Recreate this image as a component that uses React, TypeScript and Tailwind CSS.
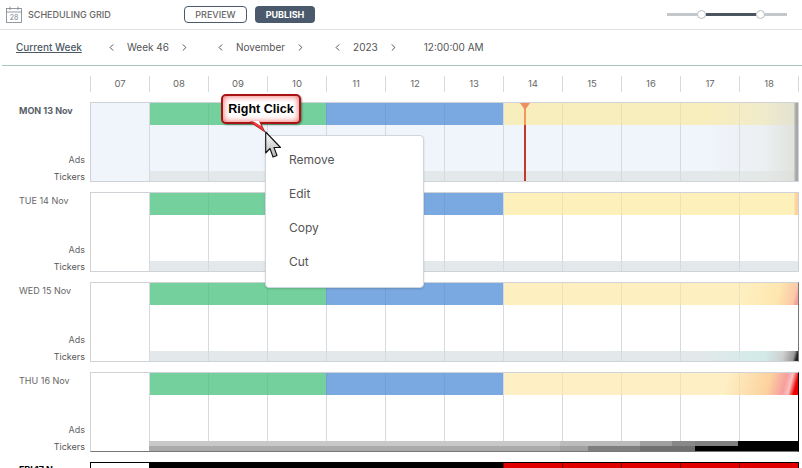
import { ChevronLeft, ChevronRight } from 'lucide-react'

const hours = ['07', '08', '09', '10', '11', '12', '13', '14', '15', '16', '17', '18']

const barColor = (i: number, yellow: string) => {
  if (i === 0) return 'bg-transparent'
  if (i <= 3) return 'bg-[#74d09d]'
  if (i <= 6) return 'bg-[#7aa8e0]'
  return yellow
}

const Pager: React.FC<{ label: string }> = ({ label }) => (
  <div className="flex items-center gap-[10px]">
    <ChevronLeft size={11} strokeWidth={2} className="text-[#444]" />
    <span>{label}</span>
    <ChevronRight size={11} strokeWidth={2} className="text-[#444]" />
  </div>
)

type DayProps = {
  label: string
  bold?: boolean
  today?: boolean
  yellow?: string
  ticker?: string
  tickerLower?: string
  fade?: string
  barFade?: string
  tickerFade?: string
  boxBorder?: string
}

const Day: React.FC<DayProps> = ({ label, bold, today, yellow = 'bg-[#fef0bb]', ticker, tickerLower, fade, barFade, tickerFade, boxBorder = 'border-[#cfd2d6]' }) => (
  <div className="flex h-[80px]">
    <div className="w-[90px] flex flex-col items-end pr-[5px] text-[9px] text-[#666]">
      <div className={`w-full pl-[19px] mt-[2px] whitespace-nowrap ${bold ? 'font-bold text-[#5a5f6a]' : 'text-[#666]'}`}>{label}</div>
      <div className="mt-auto mb-[4px] leading-[12px]">Ads</div>
      <div className="mb-[-2px] leading-[14px] text-[#555]">Tickers</div>
    </div>
    <div className={`relative w-[709px] flex flex-col border ${boxBorder} ${today ? 'bg-[#f0f4fb]' : 'bg-white'}`}>
      <div className="grid grid-cols-[58px_repeat(11,59px)] h-[22px]">
        {hours.map((h, i) => (
          <div key={h} className={`${barColor(i, yellow)} ${i === 1 || i === 7 ? 'border-l border-[#d6d9dd]' : i > 0 ? 'border-l border-black/5' : ''}`} />
        ))}
      </div>
      <div className="grid grid-cols-[58px_repeat(11,59px)] flex-1">
        {hours.map((h, i) => (
          <div key={h} className={i > 0 ? 'border-l border-[#d6d9dd]' : ''} />
        ))}
      </div>
      {ticker ? (
        <div className="ml-[58px] h-[10px] flex flex-col">
          <div className={`h-[5px] ${ticker}`} />
          <div className={`h-[5px] ${tickerLower}`} />
        </div>
      ) : (
        <div className="grid grid-cols-[58px_repeat(11,59px)] h-[10px]">
          {hours.map((h, i) => (
            <div key={h} className={i > 0 ? 'bg-[#e3e8ea] border-l border-[#d6d9dd]' : ''} />
          ))}
        </div>
      )}
      {fade && <div className={`absolute right-0 inset-y-0 w-[110px] ${fade}`} />}
      {barFade && <div className={`absolute right-0 top-0 h-[22px] w-[110px] ${barFade}`} />}
      {tickerFade && <div className={`absolute right-0 bottom-0 h-[10px] w-[110px] ${tickerFade}`} />}
      {today && (
        <div className="absolute left-[433px] top-0 bottom-0 w-[2px] bg-[#c0392b]">
          <div className="h-[22px] bg-[#f0995c]" />
          <svg width="10" height="7" viewBox="0 0 10 7" className="absolute left-[-4px] top-0">
            <path d="M0 0 H10 L5 7 Z" fill="#ee8f5f" />
          </svg>
        </div>
      )}
    </div>
  </div>
)

const App: React.FC = () => {
  return <div className="relative w-[802px] h-[468px] overflow-hidden bg-white font-['Inter',sans-serif] text-[#555]">
    {/* top bar */}
    <div className="h-[30px] flex items-center border-b border-[#dfe3e6] relative">
      <svg width="18" height="17" viewBox="0 0 18 17" className="ml-[5px] text-[#7a828a]" fill="none" stroke="currentColor" strokeWidth="0.8">
        <rect x="1.5" y="2.5" width="15" height="14" />
        <path d="M1.5 6 H16.5 M5 0.5 V4 M13 0.5 V4" />
        <text x="9" y="14" fontSize="7" textAnchor="middle" stroke="none" fill="currentColor">28</text>
      </svg>
      <span className="ml-[5px] w-[156px] text-[9px] font-medium text-[#666] whitespace-nowrap">SCHEDULING GRID</span>
      <button className="w-[63px] h-[17px] rounded-[4px] border border-[#4a5a6c] text-[9px] font-medium text-[#666]">PREVIEW</button>
      <button className="ml-[8px] w-[60px] h-[17px] rounded-[4px] bg-[#4a5a6c] text-[9px] font-bold text-white">PUBLISH</button>
      <div className="ml-auto mr-[15px] w-[120px] h-[3px] bg-[#c3c8cc] flex items-center pl-[30px]">
        <span className="w-[9px] h-[9px] rounded-full bg-white border border-[#b8bec3] shrink-0" />
        <span className="w-[50px] h-[3px] bg-[#4a5560]" />
        <span className="w-[9px] h-[9px] rounded-full bg-white border border-[#b8bec3] shrink-0" />
      </div>
    </div>
    {/* week nav */}
    <div className="h-[36px] flex items-center border-b border-[#a9c4be] ml-[2px] text-[10px] text-[#555]">
      <span className="ml-[14px] w-[90px] font-medium underline text-[#4d5a66]">Current Week</span>
      <Pager label="Week 46" />
      <div className="w-[25px]" />
      <Pager label="November" />
      <div className="w-[26px]" />
      <Pager label="2023" />
      <span className="ml-[25px]">12:00:00 AM</span>
    </div>
    {/* hours */}
    <div className="ml-[90px] mt-[10px] h-[16px] grid grid-cols-[repeat(12,59px)] w-[709px] border-r border-[#d6d9dd] text-[9.5px] text-[#666]">
      {hours.map(h => (
        <div key={h} className="border-l border-[#d6d9dd] flex items-center justify-center">{h}</div>
      ))}
    </div>
    {/* days */}
    <div className="mt-[10px] flex flex-col gap-[10px]">
      <Day
        label="MON 13 Nov"
        bold
        today
        yellow="bg-[#f8edbd]"
        fade="bg-[linear-gradient(to_right,transparent_20%,rgba(228,232,225,0.4)_70%,rgba(222,222,215,0.8)_96%,rgba(160,160,160,0.9)_98%)]"
      />
      <Day
        label="TUE 14 Nov"
        barFade="bg-[linear-gradient(to_right,transparent_96%,rgba(250,190,140,0.6)_98%)]"
      />
      <Day
        label="WED 15 Nov"
        boxBorder="border-[#cfd2d6] border-r-[#777]"
        yellow="bg-[#feefc0]"
        barFade="bg-[linear-gradient(105deg,transparent_50%,rgba(254,225,165,0.6)_80%,rgba(250,190,160,0.8)_95%,rgba(245,150,150,0.9)_98%)]"
        tickerFade="bg-[linear-gradient(105deg,transparent_10%,rgba(205,235,232,0.8)_70%,rgba(205,205,205,0.9)_85%,#999_95%,#222_98%)]"
      />
      <Day
        label="THU 16 Nov"
        boxBorder="border-[#cfd2d6] border-r-black border-b-[#777]"
        yellow="bg-[#feefc4]"
        ticker="bg-[linear-gradient(to_right,#c8c8c8_411px,#bbb_411px,#bbb_491px,#a0a0a0_491px,#a0a0a0_523px,#888_523px,#888_546px,#808080_546px,#808080_589px,#000_589px)]"
        tickerLower="bg-[linear-gradient(to_right,#aaa_411px,#a0a0a0_411px,#a0a0a0_439px,#7f7f7f_439px,#7f7f7f_491px,#707070_491px,#707070_546px,#000_546px)]"
        barFade="bg-[linear-gradient(105deg,transparent_35%,rgba(252,200,145,0.75)_72%,rgba(245,150,155,0.9)_86%,rgba(250,190,190,0.9)_91%,#e00_96%)]"
      />
      <div className="flex h-[80px]">
        <div className="w-[90px] pl-[19px] text-[9px] font-bold text-black mt-[1px]">FRI 17 Nov</div>
        <div className="w-[709px] flex flex-col border border-black bg-white">
          <div className="grid grid-cols-[58px_repeat(11,59px)] h-[22px]">
            {hours.map((h, i) => (
              <div key={h} className={i === 0 ? '' : i <= 6 ? 'bg-black' : 'bg-[#e00000] border-l border-[#7a0000]'} />
            ))}
          </div>
        </div>
      </div>
    </div>
    {/* context menu */}
    <div className="absolute left-[265px] top-[135px] w-[159px] h-[153px] rounded-[4px] border border-[#cfd6dc] bg-white shadow-[0_1px_2px_rgba(0,0,0,0.15)] flex flex-col pt-[7px] pl-[23px] text-[12px] text-[#555]">
      {['Remove', 'Edit', 'Copy', 'Cut'].map(item => (
        <div key={item} className="h-[34px] flex items-center">{item}</div>
      ))}
    </div>
    {/* callout */}
    <div className="absolute left-[221px] top-[94px] w-[80px] h-[30px] rounded-[5px] border-2 border-[#a81414] bg-white shadow-[inset_0_0_6px_#f05555,1px_1px_2px_rgba(0,0,0,0.4)] flex items-center justify-center font-['Liberation_Sans',sans-serif] text-[12.5px] font-bold text-black">Right Click</div>
    <svg width="30" height="14" viewBox="0 0 30 14" className="absolute left-[245px] top-[121px]">
      <path d="M5 1 L20 11 L15 1 Z" fill="#f03a3a" stroke="#a81414" strokeWidth="0.8" />
      <path d="M8 0 L16 5 L14 0 Z" fill="#fff" />
    </svg>
    {/* cursor */}
    <svg width="18" height="30" viewBox="0 0 18 30" className="absolute left-[265px] top-[130px]">
      <defs>
        <linearGradient id="cursorFill" x1="0" y1="0" x2="0" y2="1">
          <stop offset="0" stopColor="#ffffff" />
          <stop offset="1" stopColor="#b4b4b4" />
        </linearGradient>
      </defs>
      <path d="M0.7 2 L0.7 23 L5 18.5 L8 27 L12 25.5 L9 17.5 L15.5 17.5 Z" fill="url(#cursorFill)" stroke="#111" strokeWidth="1.1" strokeLinejoin="round" />
    </svg>
  </div>
}

export default App
